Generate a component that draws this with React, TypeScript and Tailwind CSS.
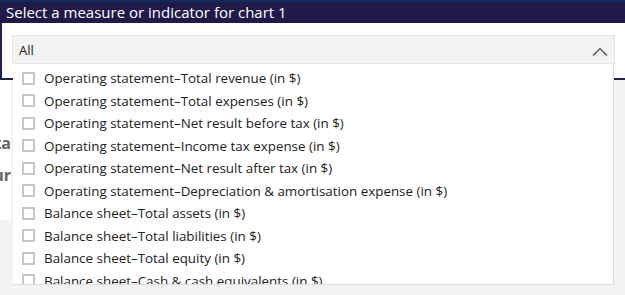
import React from 'react';

const measures: string[] = [
  'Operating statement–Total revenue (in $)',
  'Operating statement–Total expenses (in $)',
  'Operating statement–Net result before tax (in $)',
  'Operating statement–Income tax expense (in $)',
  'Operating statement–Net result after tax (in $)',
  'Operating statement–Depreciation & amortisation expense (in $)',
  'Balance sheet–Total assets (in $)',
  'Balance sheet–Total liabilities (in $)',
  'Balance sheet–Total equity (in $)',
  'Balance sheet–Cash & cash equivalents (in $)',
];

const ChevronUp: React.FC = () => (
  <svg width="16" height="9" viewBox="0 0 16 9" fill="none">
    <path d="M1 8.5 L8 1.5 L15 8.5" stroke="#444" strokeWidth="1.1" />
  </svg>
);

const App: React.FC = () => {
  return (
    <div className="relative w-[625px] h-[295px] overflow-hidden bg-[#f3f3f3] font-['Open_Sans',sans-serif]">
      {/* card header */}
      <div className="h-[23px] bg-[#201a4a] border-t-2 border-[#0d2b5c] px-[6px] text-white text-[15px] leading-[20px]">
        Select a measure or indicator for chart 1
      </div>
      {/* card body */}
      <div className="h-[57px] bg-white border-l-2 border-b-2 border-[#1c2456]" />

      {/* page behind the dropdown */}
      <div className="h-[140px] bg-white flex flex-col items-end w-[11px] overflow-hidden pt-[54px] gap-[14px] text-[16px] font-bold text-[#666] leading-[18px]">
        <span className="whitespace-nowrap">Data</span>
        <span className="whitespace-nowrap">Colour</span>
      </div>

      {/* open dropdown */}
      <div className="absolute left-[12px] top-[35px] w-[603px]">
        <div className="h-[29px] bg-[#f3f3f3] border border-[#e6e6e6] flex items-center justify-between pl-[6px] pr-[6px] pt-[3px] text-[13px] text-[#222]">
          <span>All</span>
          <ChevronUp />
        </div>
        <div className="ml-[1px] w-[601px] h-[221px] bg-white border-r border-b border-[#dedede] overflow-hidden pt-[3px]">
          {measures.map((m) => (
            <div key={m} className="h-[22.5px] shrink-0 flex items-center pl-[9px] text-[13.4px] leading-[18px] text-[#222]">
              <span className="w-[13px] h-[13px] border-2 border-[#c6c6c6] bg-white mr-[9px] shrink-0" />
              <span className="whitespace-nowrap">{m}</span>
            </div>
          ))}
        </div>
      </div>
    </div>
  );
};

export default App;
